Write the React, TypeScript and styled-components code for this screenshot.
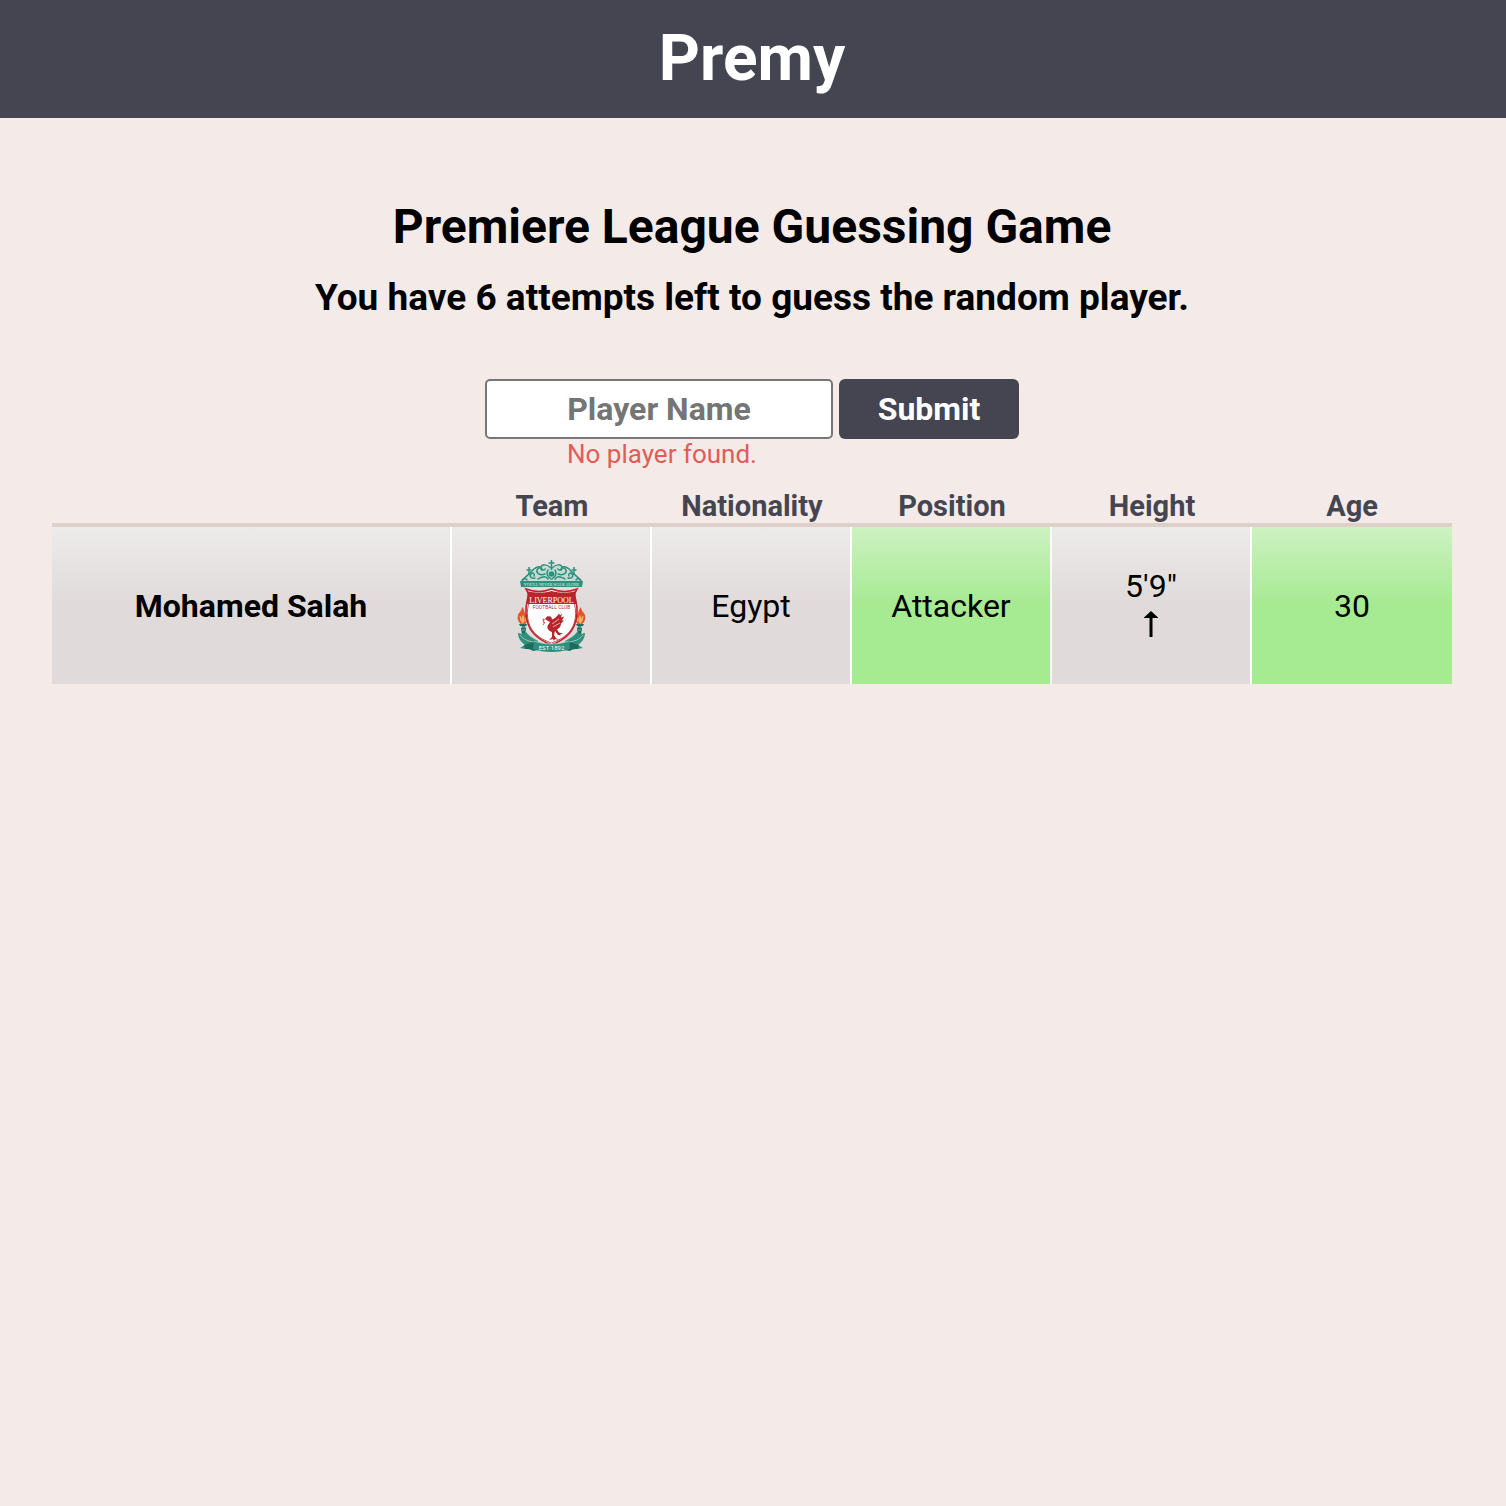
import React, { useState } from "react";
import styled, { createGlobalStyle } from "styled-components";

const GlobalStyle = createGlobalStyle`
  *, *::before, *::after { box-sizing: border-box; }
  body {
    margin: 0;
    background: #f4ebe9;
    color: #000;
    font-family: Roboto, "Liberation Sans", sans-serif;
  }
`;

const Header = styled.header`
  display: flex;
  justify-content: center;
  padding: 20px 54px 20px 52px;
  background: #444551;
`;

const Brand = styled.h1`
  margin: 0;
  font-size: 64px;
  line-height: 78px;
  font-weight: 700;
  color: #fff;
`;

const Main = styled.main`
  display: flex;
  flex-direction: column;
  align-items: center;
  padding: 80px 54px 80px 52px;
`;

const Title = styled.h2`
  margin: 0;
  font-size: 48px;
  line-height: 58px;
  font-weight: 700;
`;

const Subtitle = styled.h3`
  margin: 20px 0 60px;
  font-size: 37px;
  line-height: 43px;
  font-weight: 700;
`;

const GuessForm = styled.form`
  display: flex;
  align-items: flex-start;
`;

const Field = styled.div`
  display: flex;
  flex-direction: column;
  padding-right: 6px;
`;

const NameInput = styled.input`
  width: 348px;
  height: 60px;
  padding: 0 8px;
  border: 2px solid #767676;
  border-radius: 5px;
  background: #fff;
  font: 700 32px Roboto, "Liberation Sans", sans-serif;
  text-align: center;
  &::placeholder { color: #757575; opacity: 1; }
`;

const SubmitButton = styled.button`
  width: 180px;
  height: 60px;
  padding: 0;
  border: 0;
  border-radius: 6px;
  background: #444551;
  color: #fff;
  font: 700 32px Roboto, "Liberation Sans", sans-serif;
  cursor: pointer;
`;

const FieldError = styled.p`
  margin: 0 -6px 0 0;
  font-size: 26px;
  line-height: 30px;
  text-align: center;
  color: #e25c56;
`;

const GuessTable = styled.table`
  width: 100%;
  margin-top: 20px;
  table-layout: fixed;
  border-collapse: separate;
  border-spacing: 0;
`;

const ColumnHead = styled.th<{ $wide?: boolean }>`
  width: ${(p) => (p.$wide ? "calc(100% * 2 / 7)" : "calc(100% / 7)")};
  padding: 0;
  border-bottom: 4px solid #e0d0ca;
  font-size: 29px;
  line-height: 34px;
  font-weight: 700;
  color: #444551;
`;

const cell = (match?: boolean) => `
  height: 157px;
  padding: 0;
  border-right: 2px solid #fff;
  background: ${
    match
      ? "linear-gradient(#cdf2c2, #a6ea91 50%)"
      : "linear-gradient(#edebea, #e0dada 50%)"
  };
  font-size: 32px;
  line-height: 38px;
  text-align: center;
  vertical-align: middle;
  &:last-child { border-right: 0; }
`;

const PlayerCell = styled.th`
  ${cell()}
  font-weight: 700;
`;

const Cell = styled.td<{ $match?: boolean }>`
  ${(p) => cell(p.$match)}
`;

const Arrow = styled.svg`
  display: block;
  width: 14px;
  height: 26px;
  margin: 6px auto 8px;
`;

const Crest = styled.svg`
  display: block;
  width: 72px;
  height: 96px;
  margin: 0 auto;
`;

const TEAL = "#2f8f7c";
const DARK_TEAL = "#1d6b5c";
const RED = "#b9252b";

const ArrowUp = () => (
  <Arrow viewBox="0 0 14 26" role="img" aria-label="Taller">
    <path d="M7 0l7 6.500v.500H8.500V26h-3V7H0v-.500z" fill="#000" />
  </Arrow>
);

const Scrollwork = () => (
  <g fill="none" stroke={TEAL} strokeWidth="1.5" strokeLinecap="round">
    <path d="M41 13C37 9 32 9 31 12s3 4 4 2" />
    <path d="M35 19c-5 2-9-1-8-4s5-3 5 0" />
    <path d="M30 12c-4-1-6 2-9 5s-5 4-8 8" />
    <path d="M25 23c-4 1-6-2-4-4s4 0 3 2" />
    <path d="M38 24c-3-5-8-1-10 0" />
    <path d="M17 25c-2-3-5-1-5 1" />
    <path d="M38 15c-2 3-1 6 3 9" />
  </g>
);

const Torch = () => (
  <g>
    <path d="M12 52c3 3 2 6 4 8 2 3 2 7-1 9h-4c-3-2-4-6-3-9 1-3 4-4 4-8z" fill="#e4532b" />
    <path d="M13 60c2 2 2 6 0 9-3-2-2-6 0-9z" fill="#fbb55c" />
    <path d="M10 61l1 5m5-3-1 4" stroke="#fbd4a0" strokeWidth="0.8" />
    <path d="M9 69h8l-1 2h-1l1 3-1 5h-3l-1-5 1-3h-2z" fill={DARK_TEAL} />
    <path d="M11 72h5M12 75h3" stroke="#a5d4c4" strokeWidth="0.7" />
  </g>
);

const MirrorHalf = ({ children }: { children: React.ReactNode }) => (
  <>
    {children}
    <g transform="translate(83 0) scale(-1 1)">{children}</g>
  </>
);

const LiverpoolCrest = () => (
  <Crest viewBox="5 3 72 96" role="img" aria-label="Liverpool">
    <path
      d="M12 26c3-4 7-8 11-10s6-5 9-5 6 0 9.500 2c3-2 6-2 9-2s5 3 9 5 8 6 11 10z"
      fill="#c2dcd3"
    />
    <MirrorHalf>
      <Scrollwork />
    </MirrorHalf>
    <path d="M41.500 5v10M38.500 8h6M19 12v8M16.500 15h5M64 12v8M61.500 15h5" stroke={TEAL} strokeWidth="1.500" />
    <circle cx="41.500" cy="19" r="2.800" fill={TEAL} />
    <path d="M10 26h63l-1 6H11z" fill={TEAL} />
    <text
      x="41.500"
      y="31"
      fill="#e6f4ef"
      fontFamily="Liberation Serif, serif"
      fontSize="4"
      textAnchor="middle"
    >
      YOU&apos;LL NEVER WALK ALONE
    </text>

    <MirrorHalf>
      <Torch />
      <path
        d="M8 78c3 1 5 1 8-1 2 3 6 6 12 9l1 9-5 1c-2-2-5-2-8-2l-6-1 5-3c-4-3-7-7-7-12z"
        fill={TEAL}
      />
      <path d="M14 90c4-1 7-2 10-5l3 9-4 2c-2-2-5-2-8-2z" fill={DARK_TEAL} />
      <path d="M10 80c4 5 8 6 14 7" stroke="#8cc8b5" strokeWidth="1" fill="none" />
    </MirrorHalf>

    <path
      d="M16 34c8 3 18 3 25.500 0 8 3 18 3 25.500 0l-2 4c-1 5 3 11 2 20-1 18-11 26-25.500 32C27 84 17 76 16 58c-1-9 3-15 2-20z"
      fill="#fff"
      stroke={RED}
      strokeWidth="1.600"
    />
    <path
      d="M18.500 49c-3 13 0 25 9.500 32 4 3 8 5 13.500 7 5.500-2 9.500-4 13.500-7 9.500-7 12.500-19 9.500-32"
      fill="none"
      stroke={RED}
      strokeWidth="0.800"
    />
    <path d="M17 36c8 2 18 2 24.500 0 8 2 17 2 24.500 0-2 5-1 8 1 13H16c2-5 3-8 1-13z" fill={RED} />
    <text
      x="41.500"
      y="47.500"
      fill="#fff"
      fontFamily="Liberation Serif, serif"
      fontWeight="400"
      fontSize="8"
      textAnchor="middle"
    >
      LIVERPOOL
    </text>
    <text
      x="41.500"
      y="54"
      fill={RED}
      fontFamily="Roboto, sans-serif"
      fontSize="5"
      textAnchor="middle"
    >
      FOOTBALL CLUB
    </text>

    <g fill={RED}>
      <path d="M35 64l2-2.500c3-1 5 0 5 3 3-1 5-3 7-6l1 2 2-2-1 4 3-1-2 4 2 0-3 3c0 3-2 5-4 6l2 3 4 1-3 1 1 1-3-.5-3-4-1 4 2 3 3 2-4-1-1 2-1-2-4 1 3-3v-5c-3-1-6-4-4-7l2-3-2-1z" />
      <path d="M36 66l-1 4m7-1 7-5m-6 8 7-4" stroke="#fff" strokeWidth="0.600" />
      <path d="M35 65l-2-1 1 4m1-1-2 3" stroke={RED} strokeWidth="0.800" fill="none" />
    </g>

    <path d="M24 86c11 4 24 4 35 0l1 8c-11 4-26 4-37 0z" fill={TEAL} />
    <path d="M24 86c11 4 24 4 35 0" fill="none" stroke="#a5d4c4" strokeWidth="0.800" />
    <text
      x="41.500"
      y="95"
      fill="#fff"
      fontFamily="Roboto, sans-serif"
      fontSize="6"
      textAnchor="middle"
    >
      EST·1892
    </text>
  </Crest>
);

const columns = ["Team", "Nationality", "Position", "Height", "Age"];

export default function App() {
  const [name, setName] = useState("");

  return (
    <>
      <GlobalStyle />
      <Header>
        <Brand>Premy</Brand>
      </Header>
      <Main>
        <Title>Premiere League Guessing Game</Title>
        <Subtitle>You have 6 attempts left to guess the random player.</Subtitle>
        <GuessForm onSubmit={(e) => e.preventDefault()}>
          <Field>
            <NameInput
              type="text"
              aria-label="Player Name"
              aria-describedby="player-error"
              placeholder="Player Name"
              value={name}
              onChange={(e) => setName(e.target.value)}
            />
            <FieldError id="player-error">No player found.</FieldError>
          </Field>
          <SubmitButton type="submit">Submit</SubmitButton>
        </GuessForm>
        <GuessTable>
          <thead>
            <tr>
              <ColumnHead $wide />
              {columns.map((label) => (
                <ColumnHead key={label} scope="col">
                  {label}
                </ColumnHead>
              ))}
            </tr>
          </thead>
          <tbody>
            <tr>
              <PlayerCell scope="row">Mohamed Salah</PlayerCell>
              <Cell>
                <LiverpoolCrest />
              </Cell>
              <Cell>Egypt</Cell>
              <Cell $match>Attacker</Cell>
              <Cell>
                5&apos;9&quot;
                <ArrowUp />
              </Cell>
              <Cell $match>30</Cell>
            </tr>
          </tbody>
        </GuessTable>
      </Main>
    </>
  );
}
